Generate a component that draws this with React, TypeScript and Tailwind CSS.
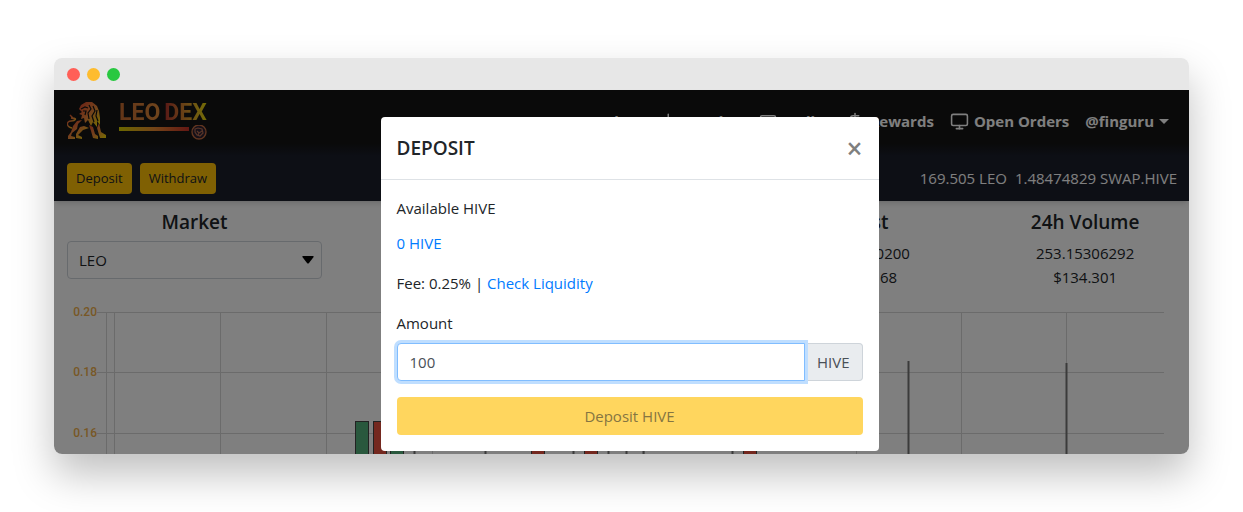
import { useState } from 'react';
import { Monitor, ChartLine, CreditCard, DollarSign } from 'lucide-react';

const stats = [
  { name: 'Last', value: '0.00220200', usd: '$0.1168' },
  { name: '24h Volume', value: '253.15306292', usd: '$134.301' },
];

const priceLines = [
  { label: '0.20', y: 22 },
  { label: '0.18', y: 82 },
  { label: '0.16', y: 143 },
];

const timeLines = [52, 60, 166, 272, 378, 484, 590, 696, 802, 907, 1012];

const candles = [
  { x: 301, up: true },
  { x: 319, up: false },
  { x: 336, up: true },
  { x: 477, up: false },
  { x: 530, up: false },
  { x: 689, up: false },
];

const wicks = [
  { x: 360, y: 150 },
  { x: 431, y: 150 },
  { x: 519, y: 150 },
  { x: 554, y: 150 },
  { x: 572, y: 150 },
  { x: 589, y: 150 },
  { x: 678, y: 150 },
  { x: 854, y: 71 },
  { x: 1012, y: 73 },
];

const Caret = () => (
  <svg viewBox="0 0 10 5" className="w-[10px] h-[5px]">
    <path d="M0 0h10L5 5z" fill="currentColor" />
  </svg>
);

const Logo = () => (
  <a href="#" className="flex items-start gap-3" aria-label="LeoDex">
    <svg viewBox="0 0 40 38" className="w-10 h-[38px]">
      <defs>
        <linearGradient id="lion" x1="0" y1="0" x2="1" y2="1">
          <stop offset="0" stopColor="#d8402a" />
          <stop offset="0.5" stopColor="#e8853a" />
          <stop offset="1" stopColor="#f0e000" />
        </linearGradient>
      </defs>
      {/* head and mane */}
      <path
        fill="url(#lion)"
        d="M12 8 L14 4 L19 1 L25 1 L30 5 L32 10 L33 17 L33 24 L30 20 L30 26 L26 21 L24 25 L21 19 L18 22 L17 17 L14 18 L15 14 L12 13 L15 11 Z"
      />
      <path
        fill="none"
        stroke="#141414"
        strokeWidth="1.2"
        d="M14 8 L18 6 L21 7 M16 10 L19 10 L18 14 M22 4 L24 8 L21 12 L22 18 M26 5 L28 10 L25 15 L27 21 M30 9 L29 15 L31 20"
      />
      {/* front legs */}
      <path
        fill="url(#lion)"
        d="M32 22 L34 31 L39 34 L39 37 L33 37 L30 27 Z M22 24 L26 26 L28 33 L31 35 L31 38 L26 37 L24 30 Z"
      />
      {/* haunch and hind legs */}
      <path
        fill="url(#lion)"
        d="M6 25 L10 20 L15 19 L11 23 L10 28 L5 32 L4 35 L8 36 L8 38 L1 38 L1 35 L4 31 Z M13 26 L17 25 L22 27 L16 29 L11 34 L15 36 L15 38 L9 37 L9 33 Z"
      />
      <path
        fill="none"
        stroke="url(#lion)"
        strokeWidth="1.4"
        d="M5 27 C-1 26 -1 20 4 20 C9 20 10 17 6 17 L3 14 M4 17 L8 18"
      />
    </svg>
    <div className="flex flex-col">
      <div className="flex gap-1 font-[Roboto,sans-serif] text-[23px] leading-6 font-bold">
        <span className="bg-linear-to-r from-[#c56a30] to-[#e08a3a] bg-clip-text text-transparent">LEO</span>
        <span className="bg-linear-to-r from-[#b02c2c] via-[#d48a2c] to-[#e8dc00] bg-clip-text text-transparent">DEX</span>
      </div>
      <svg viewBox="0 0 88 16" className="w-[88px] h-4">
        <defs>
          <linearGradient id="bar">
            <stop offset="0" stopColor="#d8d000" />
            <stop offset="0.5" stopColor="#e88a30" />
            <stop offset="1" stopColor="#c83028" />
          </linearGradient>
        </defs>
        <rect y="2" width="70" height="4" fill="url(#bar)" />
        <circle cx="80" cy="7" r="7" fill="#2a2030" stroke="#c06a40" strokeWidth="1.4" />
        <path d="M76 4 L79 3 L83 4 L84 8 L81 11 L78 10 L76 7 Z M78 6 L80 8 L83 6 M79 10 L80 8" fill="none" stroke="#b06a50" strokeWidth="1.2" />
      </svg>
    </div>
  </a>
);

const Navbar = () => (
  <header className="shadow-md">
    <nav className="flex items-start justify-between h-[66px] pl-[13px] pr-5 pt-[11px] bg-linear-to-b from-[#141414] from-80% to-[#1a1e2b]">
      <Logo />
      <div className="flex items-center gap-4 pt-2 text-[15px] leading-6 font-bold text-white whitespace-nowrap">
        <a href="#" className="flex items-center gap-[5px] pr-5">LEO Apps<Caret /></a>
        <a href="#">Tokens</a>
        <a href="#" className="flex items-center gap-[5px]"><ChartLine size={18} />Market</a>
        <a href="#" className="flex items-center gap-[5px]"><CreditCard size={18} />Wallet</a>
        <a href="#" className="flex items-center gap-[5px]"><DollarSign size={18} />Rewards</a>
        <a href="#" className="flex items-center gap-[5px]"><Monitor size={19} strokeWidth={2} />Open Orders</a>
        <a href="#" className="flex items-center gap-[5px]">@finguru<Caret /></a>
      </div>
    </nav>
    <div className="flex items-center justify-between h-[45px] px-3 bg-[#1a1e2b]">
      <div className="flex gap-2 pl-px text-[13px] text-[#212529]">
        <button className="h-[31px] px-[9px] rounded bg-[#ffc107]">Deposit</button>
        <button className="h-[31px] px-[9px] rounded bg-[#ffc107]">Withdraw</button>
      </div>
      <div className="flex gap-2 text-[15px] text-white">
        <span>169.505 LEO</span>
        <span>1.48474829 SWAP.HIVE</span>
      </div>
    </div>
  </header>
);

const PriceChart = () => (
  <svg viewBox="0 0 1135 164" className="block w-full">
    {priceLines.map((line) => (
      <g key={line.label}>
        <path d={`M43 ${line.y + 0.5}H1110`} stroke="#d6d6d6" />
        <text x="43" y={line.y + 4} textAnchor="end" className="font-[Roboto,sans-serif] text-xs font-medium" fill="#f0b04c">
          {line.label}
        </text>
      </g>
    ))}
    {timeLines.map((x) => (
      <path key={x} d={`M${x + 0.5} 22V164`} stroke="#d6d6d6" />
    ))}
    {candles.map((candle) => (
      <rect key={candle.x} x={candle.x + 0.5} y="131.5" width="13" height="40" fill={candle.up ? '#52b07a' : '#e8503e'} stroke="#444" />
    ))}
    {wicks.map((wick) => (
      <path key={wick.x} d={`M${wick.x + 0.5} ${wick.y}V164`} stroke="#777" strokeWidth="2" />
    ))}
  </svg>
);

const Market = () => (
  <main className="text-[#212529]">
    <div className="flex pl-[13px] pt-[7px]">
      <div className="w-[255px] shrink-0 mr-2 text-center">
        <label htmlFor="market" className="block mb-[5px] text-[19px] leading-7 font-semibold">Market</label>
        <div className="relative">
          <select id="market" className="block w-full h-[38px] px-[11px] rounded border border-[#ced4da] bg-white text-[15px] appearance-none">
            <option>LEO</option>
          </select>
          <svg viewBox="0 0 12 8" className="absolute right-2 top-[15px] w-3 h-2 pointer-events-none">
            <path d="M1 0h10q1 0 .6 1L7 7q-1 1-2 0L.4 1Q0 0 1 0z" />
          </svg>
        </div>
      </div>
      <div className="grid grid-cols-4 flex-1 -mr-1">
        {stats.map((stat) => (
          <div key={stat.name} className="first:col-start-3 text-center text-[15px] leading-6">
            <h2 className="mb-[5px] text-[19px] leading-7 font-semibold">{stat.name}</h2>
            <p>{stat.value}</p>
            <p>{stat.usd}</p>
          </div>
        ))}
      </div>
    </div>
    <div className="pt-px">
      <PriceChart />
    </div>
  </main>
);

const DepositModal = ({ onClose }: { onClose: () => void }) => {
  const [amount, setAmount] = useState('100');

  return (
    <div className="absolute inset-0 flex items-start justify-center pl-4 pt-[27px] bg-black/50">
      <div role="dialog" aria-labelledby="deposit-title" className="w-full max-w-[498px] rounded bg-white text-[15px] leading-6 text-[#212529]">
        <div className="flex items-center justify-between h-[63px] px-4 border-b border-[#dee2e6]">
          <h1 id="deposit-title" className="text-[19px] font-semibold">DEPOSIT</h1>
          <button onClick={onClose} aria-label="Close" className="text-[28px] leading-7 font-semibold text-[#7f7f7f]">×</button>
        </div>
        <div className="p-4">
          <p>Available HIVE</p>
          <p className="mt-[11px]"><a href="#" className="text-[#007bff]">0 HIVE</a></p>
          <p className="mt-4">Fee: 0.25% | <a href="#" className="text-[#007bff]">Check Liquidity</a></p>
          <label htmlFor="amount" className="block mt-4 mb-2">Amount</label>
          <div className="flex h-[38px] text-[#495057]">
            <input
              id="amount"
              value={amount}
              onChange={(e) => setAmount(e.target.value)}
              className="z-10 flex-1 min-w-0 px-3 rounded-l border border-[#80bdff] bg-white outline-none ring-3 ring-[#bfdeff]"
            />
            <span className="flex items-center px-3 rounded-r border border-l-0 border-[#ced4da] bg-[#e9ecef]">HIVE</span>
          </div>
          <button className="block w-full h-[38px] mt-4 rounded bg-[#ffd65e] text-[#857542]">Deposit HIVE</button>
        </div>
      </div>
    </div>
  );
};

const App = () => {
  const [isOpen, setIsOpen] = useState(true);

  return (
    <div className="min-h-screen px-[54px] py-[58px] bg-white font-['Open_Sans','Noto_Sans',sans-serif]">
      <div className="rounded-lg overflow-hidden shadow-[0_20px_40px_rgba(0,0,0,0.25)]">
        {/* Window title bar */}
        <div className="flex items-center gap-[7px] h-8 px-[13px] bg-[#e7e7e7]">
          <span className="w-[13px] h-[13px] rounded-full bg-[#ff5f57]" />
          <span className="w-[13px] h-[13px] rounded-full bg-[#febc2e]" />
          <span className="w-[13px] h-[13px] rounded-full bg-[#28c840]" />
        </div>
        <div className="relative bg-white">
          <Navbar />
          <Market />
          {isOpen && <DepositModal onClose={() => setIsOpen(false)} />}
        </div>
      </div>
    </div>
  );
};

export default App;
